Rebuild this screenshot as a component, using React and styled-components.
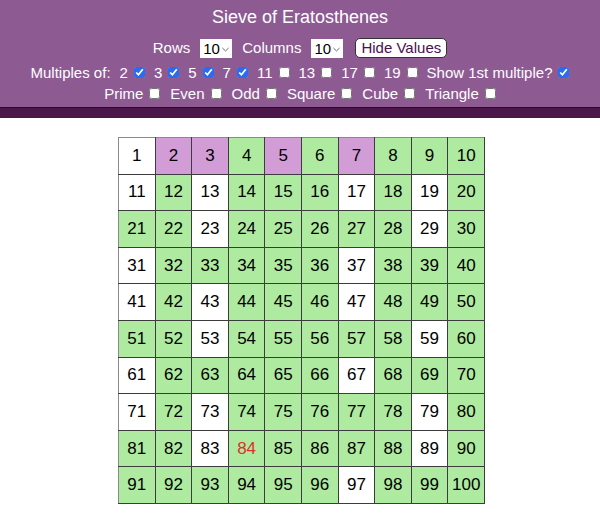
import React, { useState } from 'react'
import styled, { createGlobalStyle } from 'styled-components'

const GlobalStyle = createGlobalStyle`
  body {
    margin: 0;
    background: #fff;
    font-family: "Liberation Sans", Arial, sans-serif;
  }
`

const PRIMES = [2, 3, 5, 7, 11, 13, 17, 19]
const CHECKED = [2, 3, 5, 7]

function cellKind(n) {
  if (CHECKED.includes(n)) return 'first'
  if (CHECKED.some(p => n % p === 0)) return 'multiple'
  return 'plain'
}

function Sieve() {
  const [hover] = useState(84)
  const rows = []
  for (let r = 0; r < 10; r++) {
    const cells = []
    for (let c = 1; c <= 10; c++) {
      const n = r * 10 + c
      cells.push(
        <Cell key={n} kind={cellKind(n)} $hot={n === hover}>{n}</Cell>
      )
    }
    rows.push(<tr key={r}>{cells}</tr>)
  }

  return (
    <>
      <GlobalStyle />
      <Header>
        <Title>Sieve of Eratosthenes</Title>
        <Line>
          <Item>Rows</Item>
          <SelectWrap>
            <Select defaultValue="10">
              {[5, 6, 7, 8, 9, 10].map(v => <option key={v}>{v}</option>)}
            </Select>
            <Chevron />
          </SelectWrap>
          <Item>Columns</Item>
          <SelectWrap>
            <Select defaultValue="10">
              {[5, 6, 7, 8, 9, 10].map(v => <option key={v}>{v}</option>)}
            </Select>
            <Chevron />
          </SelectWrap>
          <Button>Hide Values</Button>
        </Line>
        <Line $gap={9}>
          <Item>Multiples of:</Item>
          {PRIMES.map(p => (
            <Item as="label" key={p}>
              {p}
              <Check defaultChecked={CHECKED.includes(p)} />
            </Item>
          ))}
          <Item as="label">
            Show 1st multiple?
            <Check defaultChecked />
          </Item>
        </Line>
        <Line>
          {['Prime', 'Even', 'Odd', 'Square', 'Cube', 'Triangle'].map(t => (
            <Item as="label" key={t}>
              {t}
              <Check />
            </Item>
          ))}
        </Line>
      </Header>
      <Board>
        <Grid>
          <tbody>{rows}</tbody>
        </Grid>
      </Board>
    </>
  )
}

function Chevron() {
  return (
    <ChevronIcon viewBox="0 0 8 5" width="7" height="5">
      <path d="M0.5 0.8 L4 4.2 L7.5 0.8" fill="none" stroke="#555" strokeWidth="1" />
    </ChevronIcon>
  )
}

export default function App() {
  return <Sieve />
}

const Header = styled.header`
  background: #8e5a92;
  color: #fff;
  padding: 6px 0 4px;
  border-bottom: 10px solid #4a1748;
  box-shadow: inset 0 -1px 0 #2a0a28;
  display: flex;
  flex-direction: column;
  align-items: center;
`

const Title = styled.h1`
  margin: 0;
  font-size: 18px;
  font-weight: normal;
  line-height: 22px;
  margin-bottom: 8px;
`

const Line = styled.div`
  display: flex;
  align-items: center;
  justify-content: center;
  gap: ${p => p.$gap || 10}px;
  font-size: 15px;
  line-height: 20px;
  height: 21px;
  &:nth-of-type(1) { height: 24px; margin-bottom: 2px; }
`

const Item = styled.span`
  display: inline-flex;
  align-items: center;
  gap: 6px;
  white-space: nowrap;
`

const SelectWrap = styled.span`
  position: relative;
  display: inline-flex;
`

const Select = styled.select`
  appearance: none;
  -webkit-appearance: none;
  background: #fff;
  border: none;
  border-radius: 0;
  font-family: "Liberation Sans", Arial, sans-serif;
  font-size: 15px;
  color: #000;
  height: 19px;
  width: 32px;
  padding: 0 0 0 3px;
  line-height: 19px;
  outline: none;
`

const ChevronIcon = styled.svg`
  position: absolute;
  right: 3px;
  top: 8px;
  pointer-events: none;
`

const Button = styled.button`
  font-family: "Liberation Sans", Arial, sans-serif;
  font-size: 15px;
  color: #4a1050;
  background: #fff;
  border: 1px solid #333;
  border-radius: 5px;
  height: 20px;
  padding: 0 5px;
  line-height: 18px;
  margin-left: 2px;
`

const Check = styled.input.attrs({ type: 'checkbox' })`
  width: 11px;
  height: 11px;
  margin: 0;
  accent-color: #2a6cf0;
`

const Board = styled.main`
  display: flex;
  justify-content: center;
  padding-top: 19px;
`

const Grid = styled.table`
  border-collapse: collapse;
  margin-left: 3px;
  tr:first-child td { border-top-color: #8a8a8a; }
  td:first-child { border-left-color: #8a8a8a; }
`

const cellBg = { first: '#d29dd6', multiple: '#aeeaa0', plain: '#fff' }

const Cell = styled.td`
  width: 35.6px;
  height: 35.6px;
  padding: 0;
  border: 1px solid #3c3c3c;
  text-align: center;
  vertical-align: middle;
  font-size: 17px;
  color: ${p => (p.$hot ? '#d8322a' : '#000')};
  background: ${p => cellBg[p.kind]};
`
